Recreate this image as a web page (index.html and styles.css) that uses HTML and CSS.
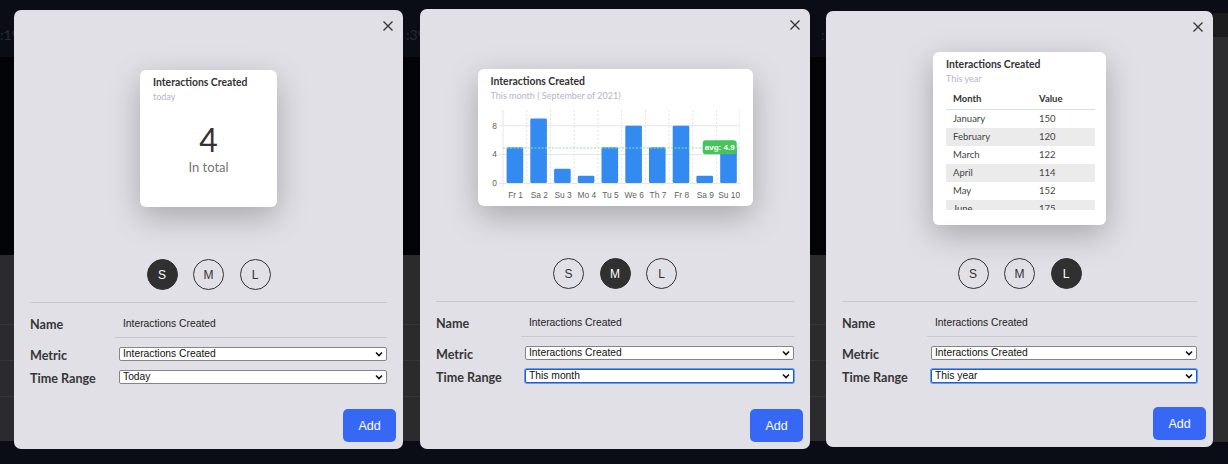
FILE: index.html
```html
<!DOCTYPE html>
<html lang="en">
<head>
    <meta charset="UTF-8">
    <meta name="viewport" content="width=device-width, initial-scale=1.0">
    <title>Add Widget</title>
    <link rel="stylesheet" href="styles.css">
</head>
<body>
    <div class="strip">

        <!-- Small widget -->
        <section class="shot shot-s">
            <div class="backdrop">
                <div class="band band-top"><span class="clock">:19</span></div>
                <div class="band band-black"></div>
                <div class="band band-grey"><div></div><div></div><div></div><div></div></div>
                <div class="band band-bottom"></div>
            </div>
            <div class="modal">
                <button class="close" aria-label="Close">
                    <svg width="10" height="10" viewBox="0 0 10 10"><path d="M0.5 0.5L9.5 9.5M9.5 0.5L0.5 9.5" stroke="#333" stroke-width="1.3"/></svg>
                </button>
                <div class="preview">
                    <div class="card card-s">
                        <div class="card-title">Interactions Created</div>
                        <div class="card-sub">today</div>
                        <div class="big-number">4</div>
                        <div class="big-caption">In total</div>
                    </div>
                </div>
                <div class="sizes">
                    <button class="size active">S</button>
                    <button class="size">M</button>
                    <button class="size">L</button>
                </div>
                <div class="modal-body">
                    <div class="divider"></div>
                    <div class="fields">
                        <label class="field-label name-label">Name</label>
                        <div class="name-value">Interactions Created</div>
                        <label class="field-label">Metric</label>
                        <div class="select">
                            <select><option>Interactions Created</option></select>
                            <svg class="chevron" width="8" height="6" viewBox="0 0 8 6"><path d="M1 1.5L4 4.5L7 1.5" stroke="#111" stroke-width="1.6" fill="none"/></svg>
                        </div>
                        <label class="field-label">Time Range</label>
                        <div class="select">
                            <select><option>Today</option></select>
                            <svg class="chevron" width="8" height="6" viewBox="0 0 8 6"><path d="M1 1.5L4 4.5L7 1.5" stroke="#111" stroke-width="1.6" fill="none"/></svg>
                        </div>
                    </div>
                </div>
                <div class="modal-footer">
                    <button class="add-btn">Add</button>
                </div>
            </div>
        </section>

        <!-- Medium widget -->
        <section class="shot shot-m">
            <div class="backdrop">
                <div class="band band-top"><span class="clock">:39</span></div>
                <div class="band band-black"></div>
                <div class="band band-grey"><div></div><div></div><div></div><div></div></div>
                <div class="band band-bottom"></div>
            </div>
            <div class="modal">
                <button class="close" aria-label="Close">
                    <svg width="10" height="10" viewBox="0 0 10 10"><path d="M0.5 0.5L9.5 9.5M9.5 0.5L0.5 9.5" stroke="#333" stroke-width="1.3"/></svg>
                </button>
                <div class="preview">
                    <div class="card card-m">
                        <div class="card-title">Interactions Created</div>
                        <div class="card-sub">This month ( September of 2021)</div>
                        <svg class="chart" width="249" height="94" viewBox="0 0 249 94">
                            <g stroke="#e4e4e8" stroke-width="1" stroke-dasharray="2 2">
                                <line x1="35.7" y1="3" x2="35.7" y2="80"/>
                                <line x1="59.5" y1="3" x2="59.5" y2="80"/>
                                <line x1="83.2" y1="3" x2="83.2" y2="80"/>
                                <line x1="106.9" y1="3" x2="106.9" y2="80"/>
                                <line x1="130.7" y1="3" x2="130.7" y2="80"/>
                                <line x1="154.4" y1="3" x2="154.4" y2="80"/>
                                <line x1="178.1" y1="3" x2="178.1" y2="80"/>
                                <line x1="201.8" y1="3" x2="201.8" y2="80"/>
                                <line x1="225.6" y1="3" x2="225.6" y2="80"/>
                                <line x1="248.8" y1="3" x2="248.8" y2="80"/>
                            </g>
                            <g stroke="#e6e6ea" stroke-width="1">
                                <line x1="8" y1="18.7" x2="249" y2="18.7"/>
                                <line x1="8" y1="47.4" x2="249" y2="47.4"/>
                                <line x1="8" y1="76.5" x2="249" y2="76.5"/>
                                <line x1="12" y1="3" x2="12" y2="80"/>
                            </g>
                            <g fill="#338af0">
                                <rect x="15.6" y="40.2" width="16.6" height="35.8" rx="1.2"/>
                                <rect x="39.3" y="11.6" width="16.6" height="64.4" rx="1.2"/>
                                <rect x="63.1" y="61.7" width="16.6" height="14.3" rx="1.2"/>
                                <rect x="86.8" y="68.8" width="16.6" height="7.2" rx="1.2"/>
                                <rect x="110.5" y="40.2" width="16.6" height="35.8" rx="1.2"/>
                                <rect x="134.3" y="18.7" width="16.6" height="57.3" rx="1.2"/>
                                <rect x="158.0" y="40.2" width="16.6" height="35.8" rx="1.2"/>
                                <rect x="181.7" y="18.7" width="16.6" height="57.3" rx="1.2"/>
                                <rect x="205.4" y="68.8" width="16.6" height="7.2" rx="1.2"/>
                                <rect x="229.2" y="40.2" width="16.6" height="35.8" rx="1.2"/>
                            </g>
                            <line x1="12" y1="41" x2="249" y2="41" stroke="#8fe39c" stroke-width="1" stroke-dasharray="2 1.5"/>
                            <rect x="211.7" y="33.3" width="34" height="14" rx="3" fill="#46c45b"/>
                            <text x="228.7" y="43.2" class="avg-text">avg: 4.9</text>
                            <g class="axis-text">
                                <text x="3.5" y="21.6">8</text>
                                <text x="3.5" y="50.3">4</text>
                                <text x="3.5" y="79.2">0</text>
                                <text x="24.6" y="90.5">Fr 1</text>
                                <text x="48.3" y="90.5">Sa 2</text>
                                <text x="72" y="90.5">Su 3</text>
                                <text x="95.8" y="90.5">Mo 4</text>
                                <text x="119.5" y="90.5">Tu 5</text>
                                <text x="143.2" y="90.5">We 6</text>
                                <text x="167" y="90.5">Th 7</text>
                                <text x="190.7" y="90.5">Fr 8</text>
                                <text x="214.4" y="90.5">Sa 9</text>
                                <text x="238.2" y="90.5">Su 10</text>
                            </g>
                        </svg>
                    </div>
                </div>
                <div class="sizes">
                    <button class="size">S</button>
                    <button class="size active">M</button>
                    <button class="size">L</button>
                </div>
                <div class="modal-body">
                    <div class="divider"></div>
                    <div class="fields">
                        <label class="field-label name-label">Name</label>
                        <div class="name-value">Interactions Created</div>
                        <label class="field-label">Metric</label>
                        <div class="select">
                            <select><option>Interactions Created</option></select>
                            <svg class="chevron" width="8" height="6" viewBox="0 0 8 6"><path d="M1 1.5L4 4.5L7 1.5" stroke="#111" stroke-width="1.6" fill="none"/></svg>
                        </div>
                        <label class="field-label">Time Range</label>
                        <div class="select select-focus">
                            <select><option>This month</option></select>
                            <svg class="chevron" width="8" height="6" viewBox="0 0 8 6"><path d="M1 1.5L4 4.5L7 1.5" stroke="#111" stroke-width="1.6" fill="none"/></svg>
                        </div>
                    </div>
                </div>
                <div class="modal-footer">
                    <button class="add-btn">Add</button>
                </div>
            </div>
        </section>

        <!-- Large widget -->
        <section class="shot shot-l">
            <div class="backdrop">
                <div class="band band-top"><span class="clock">:59</span></div>
                <div class="band band-black"></div>
                <div class="band band-grey"><div></div><div></div><div></div><div></div></div>
                <div class="band band-bottom"></div>
                <div class="side-panel"></div>
            </div>
            <div class="modal">
                <button class="close" aria-label="Close">
                    <svg width="10" height="10" viewBox="0 0 10 10"><path d="M0.5 0.5L9.5 9.5M9.5 0.5L0.5 9.5" stroke="#333" stroke-width="1.3"/></svg>
                </button>
                <div class="preview">
                    <div class="card card-l">
                        <div class="card-title">Interactions Created</div>
                        <div class="card-sub">This year</div>
                        <div class="table-wrap">
                            <table class="data-table">
                                <thead>
                                    <tr><th class="col-month">Month</th><th>Value</th></tr>
                                </thead>
                                <tbody>
                                    <tr><td>January</td><td>150</td></tr>
                                    <tr><td>February</td><td>120</td></tr>
                                    <tr><td>March</td><td>122</td></tr>
                                    <tr><td>April</td><td>114</td></tr>
                                    <tr><td>May</td><td>152</td></tr>
                                    <tr><td>June</td><td>175</td></tr>
                                </tbody>
                            </table>
                        </div>
                    </div>
                </div>
                <div class="sizes">
                    <button class="size">S</button>
                    <button class="size">M</button>
                    <button class="size active">L</button>
                </div>
                <div class="modal-body">
                    <div class="divider"></div>
                    <div class="fields">
                        <label class="field-label name-label">Name</label>
                        <div class="name-value">Interactions Created</div>
                        <label class="field-label">Metric</label>
                        <div class="select">
                            <select><option>Interactions Created</option></select>
                            <svg class="chevron" width="8" height="6" viewBox="0 0 8 6"><path d="M1 1.5L4 4.5L7 1.5" stroke="#111" stroke-width="1.6" fill="none"/></svg>
                        </div>
                        <label class="field-label">Time Range</label>
                        <div class="select select-focus">
                            <select><option>This year</option></select>
                            <svg class="chevron" width="8" height="6" viewBox="0 0 8 6"><path d="M1 1.5L4 4.5L7 1.5" stroke="#111" stroke-width="1.6" fill="none"/></svg>
                        </div>
                    </div>
                </div>
                <div class="modal-footer">
                    <button class="add-btn">Add</button>
                </div>
            </div>
        </section>

    </div>
</body>
</html>
```

FILE: styles.css
```css
body {
    margin: 0;
    background-color: #0a0d15;
    font-family: "Liberation Sans", Arial, sans-serif;
}

.strip {
    display: flex;
    height: 464px;
    overflow: hidden;
}

.shot {
    position: relative;
    flex: none;
    height: 100%;
}

.shot-s { width: 410px; }
.shot-m { width: 408px; }
.shot-l { width: 410px; }

/* page behind the modal */
.backdrop {
    height: 100%;
    display: grid;
    grid-template-rows: 57px 198px 186px 1fr;
    grid-template-columns: 1fr;
}

.shot-l .backdrop {
    grid-template-columns: 1fr 15px;
}

.band-top {
    background-color: #0a0d15;
    padding-top: 26px;
    box-sizing: border-box;
}

.clock {
    font-family: Lato, sans-serif;
    font-size: 14px;
    color: #262b36;
}

.shot-m .clock { margin-left: -4px; }
.shot-l .clock { margin-left: 3px; }

.band-black {
    background-color: #030407;
}

.band-grey {
    background-color: #2b2b2d;
    display: grid;
    grid-template-rows: 70px 36px 36px 1fr;
}

.band-grey div {
    border-bottom: 1px solid #353538;
}

.band-grey div:last-child {
    border-bottom: none;
}

.band-bottom {
    background-color: #0a0d15;
}

.side-panel {
    grid-column: 2;
    grid-row: 1 / 5;
    margin: 13px 0 22px;
    background-color: #2d2d2f;
    border-top: 24px solid #1c1c1f;
}

.shot-l .band { grid-column: 1; }

/* modal */
.modal {
    position: absolute;
    background-color: #e1e0e6;
    border-radius: 7px;
    display: flex;
    flex-direction: column;
    box-sizing: border-box;
}

.shot-s .modal { left: 14px; top: 10px; width: 389px; height: 439px; }
.shot-m .modal { left: 10px; top: 9px; width: 390px; height: 440px; }
.shot-l .modal { left: 8px; top: 11px; width: 387px; height: 436px; }

.close {
    position: absolute;
    top: 11px;
    right: 10px;
    width: 10px;
    height: 10px;
    padding: 0;
    border: none;
    background: none;
    cursor: pointer;
}

.close svg {
    display: block;
}

.preview {
    height: 249px;
    padding-top: 7px;
    box-sizing: border-box;
    display: flex;
    align-items: center;
    justify-content: center;
}

.shot-l .preview {
    height: 247px;
}

.card {
    background: white;
    border-radius: 6px;
    box-shadow: 0 10px 32px rgba(0, 0, 0, 0.26);
    padding: 5px 13px 0;
    box-sizing: border-box;
    font-family: Lato, sans-serif;
}

.card-s { width: 137px; height: 137px; }
.card-m { width: 275px; height: 137px; }
.card-l { width: 173px; height: 173px; padding-right: 11px; }

.card-title {
    font-size: 10.4px;
    line-height: 14px;
    font-weight: bold;
    color: #333;
    white-space: nowrap;
}

.card-sub {
    margin-top: 2px;
    font-size: 9px;
    line-height: 12px;
    color: #b6b4c8;
    white-space: nowrap;
}

.big-number {
    margin-top: 18px;
    text-align: center;
    font-size: 32px;
    line-height: 38px;
    font-weight: normal;
    color: #333;
}

.big-caption {
    text-align: center;
    font-size: 13px;
    line-height: 16px;
    color: #777;
}

.chart {
    display: block;
    margin-top: 5px;
}

.axis-text text {
    font-family: "Liberation Sans", Arial, sans-serif;
    font-size: 8.4px;
    fill: #5f5f5f;
    text-anchor: middle;
}

.avg-text {
    font-family: "Liberation Sans", Arial, sans-serif;
    font-size: 8px;
    font-weight: bold;
    fill: white;
    text-anchor: middle;
}

.table-wrap {
    margin-top: 3px;
    height: 122px;
    overflow: hidden;
}

.data-table {
    width: 149px;
    border-collapse: collapse;
    font-size: 9.5px;
    color: #444;
}

.data-table th {
    height: 21px;
    padding: 0 7px;
    text-align: left;
    font-weight: bold;
    color: #333;
    border-bottom: 1px solid #dcdce6;
}

.data-table .col-month {
    width: 72px;
}

.data-table td {
    height: 18px;
    padding: 0 7px;
}

.data-table tbody tr:nth-child(even) td {
    background-color: #ebebeb;
}

/* size picker */
.sizes {
    display: flex;
    justify-content: center;
    gap: 15.5px;
}

.size {
    width: 31px;
    height: 31px;
    padding: 0;
    border-radius: 50%;
    border: 1.5px solid #333;
    background: transparent;
    color: #333;
    font-family: "Liberation Sans", Arial, sans-serif;
    font-size: 12px;
    cursor: pointer;
}

.size.active {
    background-color: #303030;
    border-color: #303030;
    color: white;
}

/* form */
.modal-body {
    padding: 0 16px;
}

.divider {
    height: 1px;
    margin-top: 12px;
    background-color: #c9c8ce;
}

.fields {
    display: grid;
    grid-template-columns: 85px 1fr;
    row-gap: 9px;
    align-items: center;
}

.field-label {
    font-family: Lato, sans-serif;
    font-size: 12.6px;
    line-height: 14px;
    padding-top: 2px;
    margin-bottom: -2px;
    font-weight: bold;
    color: #363636;
}

.name-label {
    align-self: start;
    padding-top: 15px;
}

.name-value {
    padding: 14px 8px 7px;
    font-size: 10.3px;
    line-height: 13px;
    color: #222;
    border-bottom: 1px solid #c9c8ce;
}

.select {
    position: relative;
    margin-left: 4px;
    height: 14px;
}

.select select {
    display: block;
    width: 100%;
    height: 14px;
    margin: 0;
    padding: 0 3px;
    appearance: none;
    -webkit-appearance: none;
    background-color: white;
    border: 1px solid #858585;
    border-radius: 2px;
    font-family: "Liberation Sans", Arial, sans-serif;
    font-size: 10.3px;
    line-height: 12px;
    color: #111;
    outline: none;
}

.select-focus select {
    border-color: #1f5fd1;
    box-shadow: 0 0 0 1px #6d9be8;
}

.chevron {
    position: absolute;
    right: 4px;
    top: 4px;
}

.modal-footer {
    margin-top: auto;
    display: flex;
    justify-content: flex-end;
    padding: 0 7px 7px;
}

.add-btn {
    width: 53px;
    height: 33px;
    background-color: #3768f5;
    color: white;
    border: none;
    border-radius: 5px;
    font-family: "Liberation Sans", Arial, sans-serif;
    font-size: 12.5px;
    cursor: pointer;
}
```
